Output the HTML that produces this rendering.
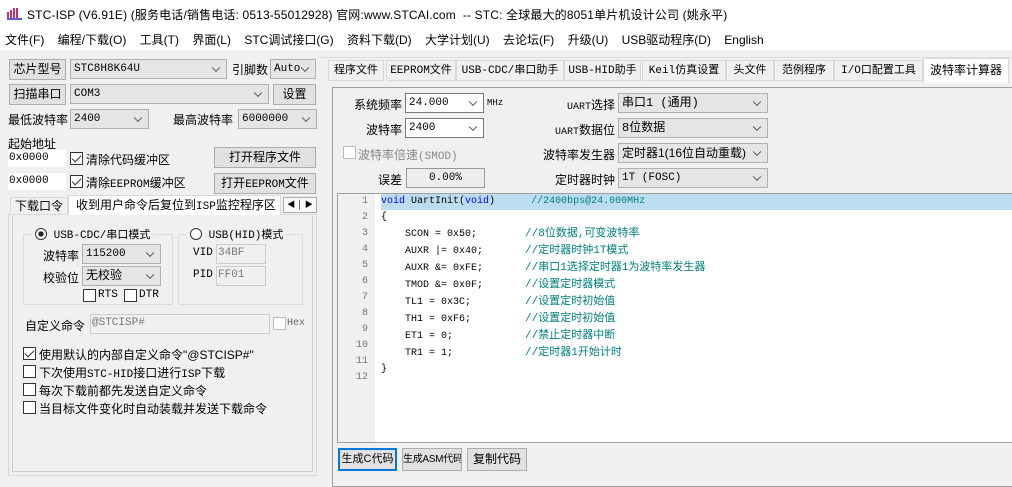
<!DOCTYPE html><html><head><meta charset="utf-8"><style>
*{box-sizing:border-box;margin:0;padding:0}
body{width:1012px;height:474px;background:#f0f0f0;font-family:"Liberation Sans","Noto Sans CJK SC",sans-serif;font-size:12px;color:#000;position:relative;overflow:hidden}
.a{position:absolute;white-space:nowrap}
.btn{position:absolute;background:#e1e1e1;border:1px solid #adadad;text-align:center;font-size:12px;white-space:nowrap;line-height:19px;overflow:hidden}
.cb{position:absolute;background:#e5e5e5;border:1px solid #b0b0b0;font-family:"Liberation Mono","Noto Sans CJK SC",monospace;font-size:11px;padding-left:3px;white-space:nowrap}
.cb.w{background:#fff;border-color:#7a7a7a}
.cb::after{content:"";position:absolute;right:7px;top:50%;width:5px;height:5px;border-right:1px solid #555;border-bottom:1px solid #555;transform:translateY(-70%) rotate(45deg)}
.in{position:absolute;background:#fff;border:1px solid #ccc;font-family:"Liberation Mono",monospace;font-size:11px;padding-left:1px}
.ck{position:absolute;width:13px;height:13px;border:1px solid #333;background:#fff}
.ck.on::after{content:"";position:absolute;left:3px;top:0px;width:4px;height:8px;border-right:1.5px solid #333;border-bottom:1.5px solid #333;transform:rotate(45deg)}
.t{font-size:12px}
.r{position:absolute;white-space:nowrap;text-align:right;font-size:12px}
.tab{position:absolute;top:60px;height:21px;border:1px solid #d9d9d9;background:#f0f0f0;font-size:11px;text-align:center;line-height:20px;font-family:"Liberation Mono","Noto Sans CJK SC",monospace;white-space:nowrap;overflow:hidden}
.m{font-family:"Liberation Mono","Noto Sans CJK SC",monospace}
.code{position:absolute;font-family:"Liberation Mono","Noto Sans CJK SC",monospace;font-size:10px;line-height:16px;white-space:pre}
.c{color:#008080;font-size:11px}
</style></head><body>
<div class="a" style="left:0;top:0;width:1012px;height:50px;background:#fff"></div>
<svg class="a" style="left:6px;top:5px" width="16" height="16"><path d="M2 14V7M5 14V5M8 14V3M11 14V3" stroke="#c03070" stroke-width="2"/><path d="M1 14h15" stroke="#6060d0" stroke-width="2"/></svg>
<div class="a" style="left:27px;top:6px;font-size:12px;letter-spacing:0.15px">STC-ISP (V6.91E) (服务电话/销售电话: 0513-55012928) 官网:www.STCAI.com &nbsp;-- STC: 全球最大的8051单片机设计公司 (姚永平)</div>
<div class="a" style="left:5px;top:31px;font-size:12px">文件(F)&nbsp;&nbsp;&nbsp;&nbsp;编程/下载(O)&nbsp;&nbsp;&nbsp;&nbsp;工具(T)&nbsp;&nbsp;&nbsp;&nbsp;界面(L)&nbsp;&nbsp;&nbsp;&nbsp;STC调试接口(G)&nbsp;&nbsp;&nbsp;&nbsp;资料下载(D)&nbsp;&nbsp;&nbsp;&nbsp;大学计划(U)&nbsp;&nbsp;&nbsp;&nbsp;去论坛(F)&nbsp;&nbsp;&nbsp;&nbsp;升级(U)&nbsp;&nbsp;&nbsp;&nbsp;USB驱动程序(D)&nbsp;&nbsp;&nbsp;&nbsp;English</div>

<div class="btn" style="left:9px;top:59px;width:57px;height:21px">芯片型号</div>
<div class="cb" style="left:70px;top:59px;width:157px;height:20px;line-height:18px">STC8H8K64U</div>
<div class="a t" style="left:232px;top:61px">引脚数</div>
<div class="cb" style="left:270px;top:59px;width:46px;height:20px;line-height:18px">Auto</div>
<div class="btn" style="left:9px;top:84px;width:57px;height:21px">扫描串口</div>
<div class="cb" style="left:70px;top:84px;width:199px;height:20px;line-height:18px">COM3</div>
<div class="btn" style="left:273px;top:84px;width:43px;height:21px">设置</div>
<div class="a t" style="left:8px;top:111px">最低波特率</div>
<div class="cb" style="left:70px;top:109px;width:79px;height:20px;line-height:18px">2400</div>
<div class="a t" style="left:173px;top:111px">最高波特率</div>
<div class="cb" style="left:238px;top:109px;width:79px;height:20px;line-height:18px">6000000</div>
<div class="a t" style="left:8px;top:135px">起始地址</div>
<div class="in" style="left:8px;top:150px;width:58px;height:17px;border:none;line-height:16px">0x0000</div>
<div class="ck on" style="left:70px;top:152px"></div><div class="a t" style="left:86px;top:151px">清除代码缓冲区</div>
<div class="btn" style="left:214px;top:147px;width:102px;height:21px">打开程序文件</div>
<div class="in" style="left:8px;top:173px;width:58px;height:17px;border:none;line-height:16px">0x0000</div>
<div class="ck on" style="left:70px;top:175px"></div><div class="a t" style="left:86px;top:174px">清除<span class="m" style="font-size:11px">EEPROM</span>缓冲区</div>
<div class="btn" style="left:214px;top:173px;width:102px;height:21px">打开<span class="m" style="font-size:11px">EEPROM</span>文件</div>
<div class="a" style="left:8px;top:214px;width:309px;height:262px;border:1px solid #d9d9d9;background:#f0f0f0"></div>
<div class="a" style="left:10px;top:197px;width:58px;height:18px;border:1px solid #d9d9d9;text-align:center;line-height:17px">下载口令</div>
<div class="a t" style="left:68px;top:195px;width:213px;height:20px;background:#fff;border:1px solid #d9d9d9;border-bottom:none;padding-left:7px;line-height:19px">收到用户命令后复位到<span class="m" style="font-size:11px">ISP</span>监控程序区</div>
<div class="a" style="left:283px;top:197px;width:34px;height:16px;border:1px solid #aaa;background:#f8f8f8;font-size:8px;line-height:14px;text-align:center">◀ │ ▶</div>
<div class="a" style="left:12px;top:216px;width:301px;height:256px;border:1px solid #ccc;border-top:none"></div>
<div class="a" style="left:23px;top:234px;width:150px;height:71px;border:1px solid #dcdcdc"></div>
<div class="a" style="left:178px;top:234px;width:125px;height:71px;border:1px solid #dcdcdc"></div>
<div class="a m" style="left:32px;top:226px;background:#f0f0f0;padding:0 3px;font-size:11px"><span style="display:inline-block;width:12px;height:12px;border:1px solid #333;border-radius:50%;vertical-align:-2px;background:radial-gradient(#222 35%,#fff 40%)"></span> USB-CDC/串口模式</div>
<div class="a m" style="left:187px;top:226px;background:#f0f0f0;padding:0 3px;font-size:11px"><span style="display:inline-block;width:12px;height:12px;border:1px solid #333;border-radius:50%;vertical-align:-2px;background:#fff"></span> USB(HID)模式</div>
<div class="a t" style="left:43px;top:247px">波特率</div>
<div class="cb" style="left:82px;top:244px;width:79px;height:20px;line-height:18px">115200</div>
<div class="a t" style="left:43px;top:269px">校验位</div>
<div class="cb" style="left:82px;top:266px;width:79px;height:20px;line-height:18px;font-size:12px">无校验</div>
<div class="ck" style="left:83px;top:289px"></div><div class="a m" style="left:98px;top:289px;font-size:11px">RTS</div>
<div class="ck" style="left:124px;top:289px"></div><div class="a m" style="left:139px;top:289px;font-size:11px">DTR</div>
<div class="a m" style="left:193px;top:247px;font-size:11px">VID</div>
<div class="in" style="left:216px;top:244px;width:50px;height:20px;background:#f0f0f0;color:#777;line-height:17px">34BF</div>
<div class="a m" style="left:193px;top:269px;font-size:11px">PID</div>
<div class="in" style="left:216px;top:266px;width:50px;height:20px;background:#f0f0f0;color:#777;line-height:17px">FF01</div>
<div class="a t" style="left:25px;top:317px">自定义命令</div>
<div class="in" style="left:90px;top:314px;width:180px;height:20px;background:#f0f0f0;color:#777;line-height:17px">@STCISP#</div>
<div class="ck" style="left:273px;top:317px;border-color:#bbb"></div><div class="a m" style="left:287px;top:318px;font-size:10px;color:#666">Hex</div>
<div class="ck on" style="left:23px;top:347px"></div><div class="a t" style="left:39px;top:346px">使用默认的内部自定义命令"@STCISP#"</div>
<div class="ck" style="left:23px;top:365px"></div><div class="a t" style="left:39px;top:364px">下次使用<span class="m" style="font-size:11px">STC-HID</span>接口进行<span class="m" style="font-size:11px">ISP</span>下载</div>
<div class="ck" style="left:23px;top:383px"></div><div class="a t" style="left:39px;top:382px">每次下载前都先发送自定义命令</div>
<div class="ck" style="left:23px;top:401px"></div><div class="a t" style="left:39px;top:400px">当目标文件变化时自动装载并发送下载命令</div>

<div class="a" style="left:320px;top:57px;width:692px;height:1px;background:#ddd"></div>
<div class="tab" style="left:328px;width:56px">程序文件</div>
<div class="tab" style="left:386px;width:70px">EEPROM文件</div>
<div class="tab" style="left:456px;width:108px">USB-CDC/串口助手</div>
<div class="tab" style="left:564px;width:77px">USB-HID助手</div>
<div class="tab" style="left:642px;width:84px">Keil仿真设置</div>
<div class="tab" style="left:726px;width:48px">头文件</div>
<div class="tab" style="left:774px;width:60px">范例程序</div>
<div class="tab" style="left:834px;width:89px">I/O口配置工具</div>
<div class="tab" style="left:923px;top:58px;width:86px;height:25px;background:#fff;border-bottom:none;font-size:12px;line-height:23px;font-family:inherit">波特率计算器</div>
<div class="a" style="left:332px;top:87px;width:690px;height:400px;border:1px solid #a0a0a0;border-right:none"></div>
<div class="r" style="right:610px;top:96px">系统频率</div>
<div class="cb w" style="left:405px;top:93px;width:79px;height:20px;line-height:18px">24.000</div>
<div class="a m" style="left:487px;top:98px;font-size:9px">MHz</div>
<div class="r" style="right:610px;top:121px">波特率</div>
<div class="cb w" style="left:405px;top:118px;width:79px;height:20px;line-height:18px">2400</div>
<div class="ck" style="left:343px;top:146px;border-color:#bbb"></div><div class="a t" style="left:358px;top:146px;color:#888">波特率倍速<span class="m" style="font-size:11px">(SMOD)</span></div>
<div class="r" style="right:610px;top:171px">误差</div>
<div class="a m" style="left:406px;top:168px;width:79px;height:20px;border:1px solid #999;background:#eee;text-align:center;line-height:18px;font-size:11px">0.00%</div>
<div class="r" style="right:397px;top:96px"><span class="m" style="font-size:10px">UART</span>选择</div>
<div class="cb" style="left:618px;top:93px;width:150px;height:20px;line-height:18px;font-size:12px">串口1 (通用)</div>
<div class="r" style="right:397px;top:121px"><span class="m" style="font-size:10px">UART</span>数据位</div>
<div class="cb" style="left:618px;top:118px;width:150px;height:20px;line-height:18px;font-size:12px">8位数据</div>
<div class="r" style="right:397px;top:146px">波特率发生器</div>
<div class="cb" style="left:618px;top:143px;width:150px;height:20px;line-height:18px;font-size:12px;font-family:inherit">定时器1(16位自动重载)</div>
<div class="r" style="right:397px;top:171px">定时器时钟</div>
<div class="cb" style="left:618px;top:168px;width:150px;height:20px;line-height:18px;font-size:11px">1T  (FOSC)</div>

<div class="a" style="left:337px;top:193px;width:680px;height:250px;border:1px solid #a0a0a0;background:#fff"></div>
<div class="a" style="left:338px;top:194px;width:37px;height:248px;background:#f0f0f0"></div>
<div class="a" style="left:381px;top:194px;width:631px;height:16px;background:#bcdcf0"></div>
<div class="code" style="left:338px;top:194px;width:30px;text-align:right;color:#777">1
2
3
4
5
6
7
8
9
10
11
12</div>
<div class="code" style="left:381px;top:194px"><span style="color:#0000ff">void</span> UartInit(<span style="color:#0000ff">void</span>)      <span class="c" style="font-size:10px">//2400bps@24.000MHz</span>
{
    SCON = 0x50;        <span class="c">//8位数据,可变波特率</span>
    AUXR |= 0x40;       <span class="c">//定时器时钟1T模式</span>
    AUXR &amp;= 0xFE;       <span class="c">//串口1选择定时器1为波特率发生器</span>
    TMOD &amp;= 0x0F;       <span class="c">//设置定时器模式</span>
    TL1 = 0x3C;         <span class="c">//设置定时初始值</span>
    TH1 = 0xF6;         <span class="c">//设置定时初始值</span>
    ET1 = 0;            <span class="c">//禁止定时器中断</span>
    TR1 = 1;            <span class="c">//定时器1开始计时</span>
}</div>
<div class="btn" style="left:338px;top:448px;width:59px;height:23px;border:2px solid #0078d7;line-height:19px;font-size:11px">生成C代码</div>
<div class="btn" style="left:402px;top:448px;width:60px;height:23px;line-height:21px;font-size:10px;letter-spacing:-0.3px">生成ASM代码</div>
<div class="btn" style="left:467px;top:448px;width:60px;height:23px;line-height:21px">复制代码</div>
</body></html>
